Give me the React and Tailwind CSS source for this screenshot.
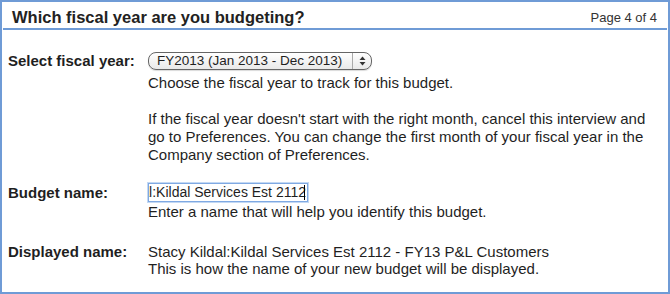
export default function App() {
  return (
    <div className="w-[670px] h-[294px] bg-white text-[#1f1f1f] border-2 border-[#6f9bd6]" style={{ fontFamily: '"Liberation Sans", Arial, sans-serif' }}>
      {/* header */}
      <div className="flex items-end justify-between h-[26px] pl-[10px] pr-[11px] pb-[3px]">
        <h1 className="text-[16.5px] font-bold leading-none text-[#222]">Which fiscal year are you budgeting?</h1>
        <span className="text-[13px] leading-none text-[#333] pb-[1px]">Page 4 of 4</span>
      </div>
      <div className="mx-[1px] h-[2px] bg-[#6f9bd6]" />

      <div className="pl-[6px] pt-[22px] text-[15px]">
        {/* fiscal year */}
        <div className="flex leading-[18px]">
          <div className="w-[140px] shrink-0 font-bold">Select fiscal year:</div>
          <div className="flex flex-col">
            <div className="flex items-center w-[224px] h-[18px] rounded-[8px] border border-[#666] bg-gradient-to-b from-white to-[#e9e9e9] shadow-[0_1px_1px_rgba(0,0,0,0.15)]">
              <span className="flex-1 pl-[8px] text-[13.5px] leading-none">FY2013 (Jan 2013 - Dec 2013)</span>
              <span className="flex items-center justify-center w-[19px] h-full border-l border-[#aaa]">
                <svg width="7" height="10" viewBox="0 0 7 10">
                  <path d="M3.5 0.5 L6.5 4 H0.5 Z" fill="#333" />
                  <path d="M3.5 9.5 L6.5 6 H0.5 Z" fill="#333" />
                </svg>
              </span>
            </div>
            <p className="mt-[4px]">Choose the fiscal year to track for this budget.</p>
            <p className="mt-[18px] whitespace-nowrap">
              If the fiscal year doesn't start with the right month, cancel this interview and
              <br />
              go to Preferences. You can change the first month of your fiscal year in the
              <br />
              Company section of Preferences.
            </p>
          </div>
        </div>

        {/* budget name */}
        <div className="flex mt-[19px] leading-[17px]">
          <div className="w-[140px] shrink-0 font-bold pt-[1px]">Budget name:</div>
          <div className="flex flex-col">
            <div className="flex items-center justify-end w-[160px] h-[19px] overflow-hidden border border-[#7fa9e3] shadow-[0_0_0_1px_#c3d8f3] pr-[2px] whitespace-nowrap text-[14px]">
              <span>al:Kildal Services Est 2112</span>
              <span className="w-[1px] h-[15px] shrink-0 bg-black -ml-[2px]" />
            </div>
            <p className="mt-[1px]">Enter a name that will help you identify this budget.</p>
          </div>
        </div>

        {/* displayed name */}
        <div className="flex mt-[23px] leading-[17px]">
          <div className="w-[140px] shrink-0 font-bold">Displayed name:</div>
          <div className="flex flex-col">
            <p>Stacy Kildal:Kildal Services Est 2112 - FY13 P&amp;L Customers</p>
            <p>This is how the name of your new budget will be displayed.</p>
          </div>
        </div>
      </div>
    </div>
  )
}
